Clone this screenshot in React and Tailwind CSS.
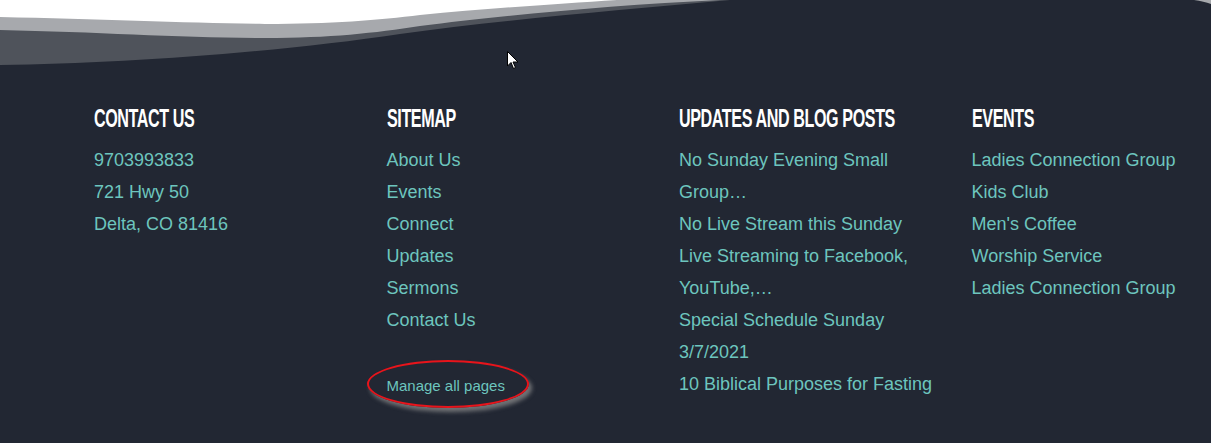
import React from "react";

const columns = [
  {
    title: "CONTACT US",
    links: ["9703993833", "721 Hwy 50", "Delta, CO 81416"],
  },
  {
    title: "SITEMAP",
    links: ["About Us", "Events", "Connect", "Updates", "Sermons", "Contact Us"],
    manage: true,
  },
  {
    title: "UPDATES AND BLOG POSTS",
    links: [
      "No Sunday Evening Small Group…",
      "No Live Stream this Sunday",
      "Live Streaming to Facebook, YouTube,…",
      "Special Schedule Sunday 3/7/2021",
      "10 Biblical Purposes for Fasting",
    ],
  },
  {
    title: "EVENTS",
    links: [
      "Ladies Connection Group",
      "Kids Club",
      "Men's Coffee",
      "Worship Service",
      "Ladies Connection Group",
    ],
  },
];

function Wave() {
  return (
    <svg className="block w-full h-[66px]" viewBox="0 0 1211 66" preserveAspectRatio="none">
      <path d="M0,0 L0,65 C120,64 280,52 400,34 C500,20 620,10 730,0 Z" fill="#4f535b" />
      <path d="M0,0 L0,30 C100,32 180,38 265,38 C330,38 375,33 420,26 C500,16 610,5 720,0 Z" fill="#a7a9ad" />
      <path d="M0,0 L0,17 C100,19 190,23 265,24 C330,24 380,20 420,15 C490,8 560,4 617,0 Z" fill="#ffffff" />
      <path d="M1194,0 C1201,1 1206,2 1211,4 L1211,0 Z" fill="#a7a9ad" />
    </svg>
  );
}

export default function App() {
  return (
    <div className="relative w-[1211px] h-[443px] overflow-hidden bg-[#222733] font-['Liberation_Sans',Arial,sans-serif]">
      <Wave />

      <div className="flex pl-[94px] pt-[39px] gap-[30px]">
        {columns.map((col) => (
          <div key={col.title} className="w-[262.5px] shrink-0">
            <h3 className="h-[26px] text-[26px] leading-none font-bold text-white whitespace-nowrap scale-x-[0.62] origin-left tracking-tight">
              {col.title}
            </h3>
            <ul className="mt-[13px] text-[18px] leading-[32px] text-[#6dc5be]">
              {col.links.map((l, i) => (
                <li key={i}>{l}</li>
              ))}
            </ul>
            {col.manage && (
              <div className="relative mt-[41px] text-[15px] leading-[18px] text-[#6dc5be]">
                Manage all pages
                <span className="absolute left-[-20px] top-[-17px] w-[162px] h-[48px] rounded-[50%] border-2 border-[#e8141b] shadow-[3px_4px_4px_rgba(140,140,140,0.75)]" />
              </div>
            )}
          </div>
        ))}
      </div>

      <svg className="absolute left-[507px] top-[51px]" width="12" height="19" viewBox="0 0 12 19">
        <path d="M0.5,0.5 L0.5,15 L4,11.5 L6.5,17.5 L8.5,16.5 L6,11 L11,11 Z" fill="#ffffff" stroke="#000" strokeWidth="1" />
      </svg>
    </div>
  );
}
